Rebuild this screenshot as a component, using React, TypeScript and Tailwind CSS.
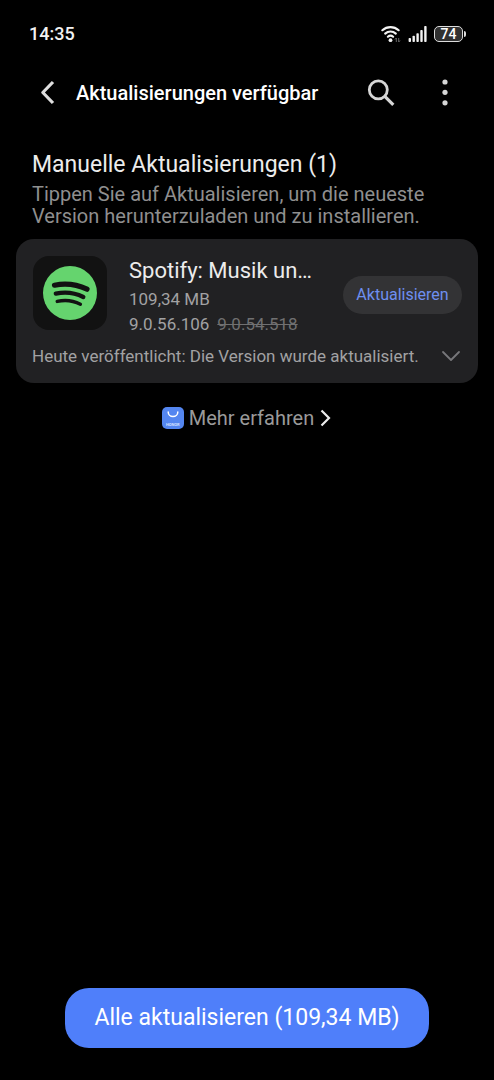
import { useState } from 'react'
import clsx from 'clsx'

interface AppUpdate {
  name: string
  size: string
  version: string
  previousVersion: string
  notes: string
}

const update: AppUpdate = {
  name: 'Spotify: Musik un…',
  size: '109,34 MB',
  version: '9.0.56.106',
  previousVersion: '9.0.54.518',
  notes: 'Heute veröffentlicht: Die Version wurde aktualisiert.'
}

function WifiIcon() {
  return (
    <svg width="20" height="18" viewBox="0 0 20 18" fill="none" aria-hidden="true">
      <g stroke="#f2f2f2" strokeWidth="2.2" strokeLinecap="round">
        <path d="M1.4 5.2a12 12 0 0 1 16.2 0" />
        <path d="M4.2 8.6a7.800 7.800 0 0 1 10.600 0" />
        <path d="M6.900 11.700a3.900 3.900 0 0 1 5.200 0" />
      </g>
      <circle cx="9.500" cy="15.200" r="1.900" fill="#f2f2f2" />
      <path d="M15.300 17v-4l-1.300 1.500M17.700 13v4l1.300-1.500" stroke="#666" strokeWidth="1" />
    </svg>
  )
}

function SignalIcon() {
  return (
    <svg width="20" height="18" viewBox="0 0 20 18" fill="#f2f2f2" aria-hidden="true">
      <rect x="0.600" y="13" width="2.400" height="4" rx="0.800" />
      <rect x="4.500" y="10.800" width="2.400" height="6.200" rx="0.800" />
      <rect x="8.400" y="8.200" width="2.400" height="8.800" rx="0.800" />
      <rect x="12.300" y="5" width="2.400" height="12" rx="0.800" />
      <rect x="16.200" y="1" width="2.400" height="16" rx="0.800" />
    </svg>
  )
}

function Battery({ level }: { level: number }) {
  return (
    <div className="flex items-center gap-px">
      <div className="flex h-4 w-[29px] items-center justify-center rounded-[5px] border border-[#dcdcdc] bg-[#303030] text-sm leading-none font-medium text-white">
        {level}
      </div>
      <div className="h-1.5 w-0.5 rounded-r-sm bg-[#dcdcdc]" />
    </div>
  )
}

function SpotifyLogo() {
  return (
    <svg width="54" height="54" viewBox="0 0 54 54" fill="none" aria-hidden="true">
      <circle cx="27" cy="27" r="27" fill="#65d46e" />
      <g stroke="#121212" strokeLinecap="round">
        <path d="M11.500 19.200Q28.500 15.800 44 23.200" strokeWidth="5.200" />
        <path d="M12.800 27.600Q27.500 24.500 40.300 31" strokeWidth="4.300" />
        <path d="M14.200 35.400Q26.500 32.600 37.400 38.200" strokeWidth="3.400" />
      </g>
    </svg>
  )
}

function HonorMarketIcon() {
  return (
    <span className="flex size-[22px] flex-col items-center justify-between rounded-[5px] bg-[#5486f0] pt-1 pb-0.5">
      <svg width="12" height="7" viewBox="0 0 12 7" fill="none" aria-hidden="true">
        <path d="M1.200 1a4.800 4.600 0 0 0 9.600 0" stroke="#fff" strokeWidth="1.500" strokeLinecap="round" />
      </svg>
      <span className="text-[4px] leading-none font-bold text-[#d5e0ff]">HONOR</span>
    </span>
  )
}

function UpdateCard({ name, size, version, previousVersion, notes }: AppUpdate) {
  const [expanded, setExpanded] = useState(false)

  return (
    <article className="mx-4 rounded-[18px] bg-[#212123] px-4 pt-[17px] pb-[13px]">
      <div className="flex items-start">
        <div className="ml-px flex size-[74px] shrink-0 items-center justify-center rounded-2xl bg-[#121212]">
          <SpotifyLogo />
        </div>
        <div className="ml-[22px] min-w-0 flex-1">
          <h3 className="truncate text-[22px] leading-[30px] text-[#ececec]">{name}</h3>
          <p className="text-[17px] leading-[26px] text-[#a2a2a3]">{size}</p>
          <p className="flex gap-2 text-[17px] leading-[24px] text-[#a2a2a3]">
            <span>{version}</span>
            <s className="text-[#707071]">{previousVersion}</s>
          </p>
        </div>
        <button type="button" className="mt-5 ml-5 h-[38px] w-[119px] shrink-0 rounded-full bg-[#333335] text-base text-[#6e8ff0]">
          Aktualisieren
        </button>
      </div>
      <button
        type="button"
        aria-expanded={expanded}
        onClick={() => setExpanded(!expanded)}
        className="mt-1.5 flex w-full items-center justify-between text-left text-[17px] leading-[28px] text-[#a2a2a3]"
      >
        <span className={clsx(!expanded && 'truncate')}>{notes}</span>
        <svg width="20" height="12" viewBox="0 0 20 12" fill="none" className={clsx('mr-px shrink-0', expanded && 'rotate-180')} aria-hidden="true">
          <path d="M2 2l8 8 8-8" stroke="#77777a" strokeWidth="1.800" strokeLinecap="round" strokeLinejoin="round" />
        </svg>
      </button>
    </article>
  )
}

export default function App() {
  return (
    <div className="flex min-h-screen flex-col bg-black font-['Roboto',sans-serif] text-white">
      <div className="flex h-[67px] items-center justify-between pr-7 pl-[29px]">
        <time className="text-lg font-medium text-[#f2f2f2]">14:35</time>
        <div className="flex items-center gap-[7px]">
          <WifiIcon />
          <div className="flex items-center gap-1.5">
            <SignalIcon />
            <Battery level={74} />
          </div>
        </div>
      </div>

      <header className="flex h-[52px] items-center pr-[35px] pl-[38px]">
        <button type="button" aria-label="Zurück" className="flex w-[38px] shrink-0">
          <svg width="18" height="28" viewBox="0 0 18 28" fill="none" aria-hidden="true">
            <path d="M15 3L4.800 13.500 15 24" stroke="#dedede" strokeWidth="3.200" strokeLinejoin="round" />
          </svg>
        </button>
        <h1 className="flex-1 text-xl font-medium">Aktualisierungen verfügbar</h1>
        <button type="button" aria-label="Suchen" className="mr-9">
          <svg width="28" height="28" viewBox="0 0 28 28" fill="none" aria-hidden="true">
            <circle cx="11.300" cy="10.800" r="9" stroke="#d6d6d6" strokeWidth="2.800" />
            <path d="M17.800 17.300l8.500 8.500" stroke="#d6d6d6" strokeWidth="3.200" />
          </svg>
        </button>
        <button type="button" aria-label="Weitere Optionen">
          <svg width="28" height="28" viewBox="0 0 28 28" fill="#d6d6d6" aria-hidden="true">
            <circle cx="14" cy="3" r="2.600" />
            <circle cx="14" cy="13.300" r="2.600" />
            <circle cx="14" cy="23.800" r="2.600" />
          </svg>
        </button>
      </header>

      <main>
        <div className="px-8 pt-8 pb-3">
          <h2 className="text-[23px] leading-[28px] text-[#ececec]">Manuelle Aktualisierungen (1)</h2>
          <p className="pt-1 text-xl leading-[22px] text-[#8f8f8f]">
            Tippen Sie auf Aktualisieren, um die neueste Version herunterzuladen und zu installieren.
          </p>
        </div>

        <UpdateCard {...update} />

        <a href="#" className="mx-auto mt-[21px] flex w-fit items-center text-xl leading-[28px] text-[#9a9a9a]">
          <HonorMarketIcon />
          <span className="ml-[5px]">Mehr erfahren</span>
          <svg width="12" height="20" viewBox="0 0 12 20" fill="none" className="ml-1.5" aria-hidden="true">
            <path d="M1.500 2.500L9 10l-7.500 7.500" stroke="#ececec" strokeWidth="2.200" />
          </svg>
        </a>
      </main>

      <footer className="mt-auto px-[65px] pb-8">
        <button type="button" className="h-[60px] w-full rounded-3xl bg-[#4f7ffa] text-[23px] text-white">
          Alle aktualisieren (109,34 MB)
        </button>
      </footer>
    </div>
  )
}
